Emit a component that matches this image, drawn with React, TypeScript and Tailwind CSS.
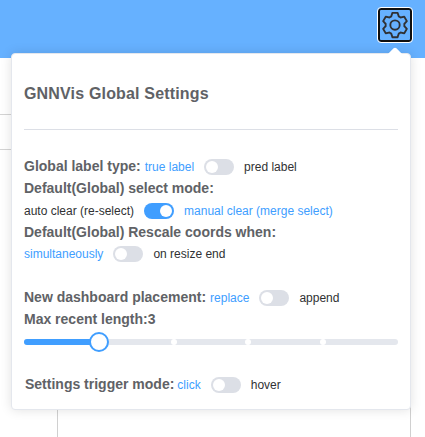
import type { ReactNode } from "react";

function GearIcon() {
  return (
    <svg viewBox="0 0 1024 1024" className="size-[30px] shrink-0" fill="#303133">
      <path d="M600.704 64a32 32 0 0 1 30.464 22.208l35.2 109.376c14.784 7.232 28.928 15.36 42.432 24.512l112.384-24.192a32 32 0 0 1 34.432 15.36L944.32 364.8a32 32 0 0 1-4.032 37.504l-77.12 85.12a357.12 357.12 0 0 1 0 49.024l77.12 85.248a32 32 0 0 1 4.032 37.504l-88.704 153.6a32 32 0 0 1-34.432 15.296L708.8 803.904c-13.44 9.088-27.648 17.28-42.368 24.512l-35.264 109.376A32 32 0 0 1 600.704 960H423.296a32 32 0 0 1-30.464-22.208L357.696 828.48a351.616 351.616 0 0 1-42.56-24.64l-112.32 24.256a32 32 0 0 1-34.432-15.36L79.68 659.2a32 32 0 0 1 4.032-37.504l77.12-85.248a357.12 357.12 0 0 1 0-48.896l-77.12-85.248A32 32 0 0 1 79.68 364.8l88.704-153.6a32 32 0 0 1 34.432-15.296l112.32 24.256c13.568-9.152 27.776-17.408 42.56-24.64l35.2-109.312A32 32 0 0 1 423.232 64H600.64zm-23.424 64H446.72l-36.352 113.088-24.512 11.968a294.113 294.113 0 0 0-34.816 20.096l-22.656 15.36-116.224-25.088-65.28 113.152 79.68 88.192-1.92 27.136a293.12 293.12 0 0 0 0 40.192l1.92 27.136-79.808 88.192 65.344 113.152 116.224-25.024 22.656 15.296a294.113 294.113 0 0 0 34.816 20.096l24.512 11.968L446.72 896h130.688l36.48-113.152 24.448-11.904a288.282 288.282 0 0 0 34.752-20.096l22.592-15.296 116.288 25.024 65.28-113.152-79.744-88.192 1.92-27.136a293.12 293.12 0 0 0 0-40.256l-1.92-27.136 79.808-88.128-65.344-113.152-116.288 24.96-22.592-15.232a287.616 287.616 0 0 0-34.752-20.096l-24.448-11.904L577.344 128zM512 320a192 192 0 1 1 0 384 192 192 0 0 1 0-384zm0 64a128 128 0 1 0 0 256 128 128 0 0 0 0-256z" />
    </svg>
  );
}

function Toggle({ off, on, checked = false }: { off: string; on: string; checked?: boolean }) {
  const active = "text-[#409eff]";
  const idle = "text-[#303133]";
  return (
    <div className="flex h-5 items-center text-[12px] whitespace-nowrap">
      <span className={checked ? idle : active}>{off}</span>
      <button
        role="switch"
        aria-checked={checked}
        className={`mx-2.5 flex h-4 w-[30px] items-center rounded-full px-0.5 ${
          checked ? "justify-end bg-[#409eff]" : "justify-start bg-[#dcdfe6]"
        }`}
      >
        <span className="size-3 rounded-full bg-white" />
      </button>
      <span className={checked ? active : idle}>{on}</span>
    </div>
  );
}

function Label({ children }: { children: ReactNode }) {
  return (
    <span className="mb-0.5 text-[14px] leading-5 font-bold whitespace-nowrap text-[#606266]">{children}</span>
  );
}

function Slider() {
  return (
    <div className="relative mt-2 h-1.5 rounded-full bg-[#e4e7ed]">
      <div className="h-1.5 w-1/5 rounded-l-full bg-[#409eff]" />
      <span className="absolute top-0 left-[40%] size-1.5 -translate-x-1/2 rounded-full bg-white" />
      <span className="absolute top-0 left-[60%] size-1.5 -translate-x-1/2 rounded-full bg-white" />
      <span className="absolute top-0 left-[80%] size-1.5 -translate-x-1/2 rounded-full bg-white" />
      <span className="absolute -top-[7px] left-[20%] size-5 -translate-x-1/2 rounded-full border-2 border-[#409eff] bg-white" />
    </div>
  );
}

export default function App() {
  return (
    <div className="relative flex h-[437px] w-[425px] flex-col overflow-hidden bg-white font-['Liberation_Sans',Arial,sans-serif]">
      <header className="flex h-[58px] shrink-0 justify-end bg-[#66b1ff] pt-[7px] pr-3">
        <button className="flex size-9 items-center justify-center rounded-[4px] border border-white bg-[#66b1ff] shadow-[inset_0_0_0_2px_#101010]">
          <GearIcon />
        </button>
      </header>
      <div className="flex flex-1">
        <div className="flex w-[58px] flex-col border-r border-[#d0d0d0]">
          <div className="h-[57px] border-b border-[#d4d4d4]" />
          <div className="h-[35px] border-b border-[#d4d4d4]" />
        </div>
        <div className="w-[353px] border-r border-[#d0d0d0]" />
      </div>

      <section className="absolute top-[53px] left-[11px] h-[357px] w-[400px] rounded-[4px] border border-[#e4e7ed] bg-white px-3 pt-3 shadow-[0_0_12px_rgba(0,0,0,0.12)]">
        <span className="absolute -top-[5px] left-[378px] size-2.5 rotate-45 rounded-tl-[2px] bg-white" />
        <h1 className="mt-4 text-[16px] leading-6 font-bold tracking-[0.17px] text-[#606266]">
          GNNVis Global Settings
        </h1>
        <hr className="mt-[23px] border-[#dcdfe6]" />
        <div className="mt-[26px] flex h-[22px] items-center gap-1">
          <Label>Global label type:</Label>
          <Toggle off="true label" on="pred label" />
        </div>
        <div className="flex h-[22px] items-center">
          <Label>Default(Global) select mode:</Label>
        </div>
        <div className="flex h-[22px] items-center">
          <Toggle off="auto clear (re-select)" on="manual clear (merge select)" checked />
        </div>
        <div className="flex h-[21px] items-start">
          <Label>Default(Global) Rescale coords when:</Label>
        </div>
        <div className="flex h-[22px] items-center">
          <Toggle off="simultaneously" on="on resize end" />
        </div>
        <div className="mt-[22px] flex h-[22px] items-center gap-1">
          <Label>New dashboard placement:</Label>
          <Toggle off="replace" on="append" />
        </div>
        <div className="flex h-[22px] items-center">
          <Label>Max recent length:3</Label>
        </div>
        <Slider />
        <div className="mt-[29px] ml-px flex h-[22px] items-center gap-[3px]">
          <Label>Settings trigger mode:</Label>
          <Toggle off="click" on="hover" />
        </div>
      </section>
    </div>
  );
}
